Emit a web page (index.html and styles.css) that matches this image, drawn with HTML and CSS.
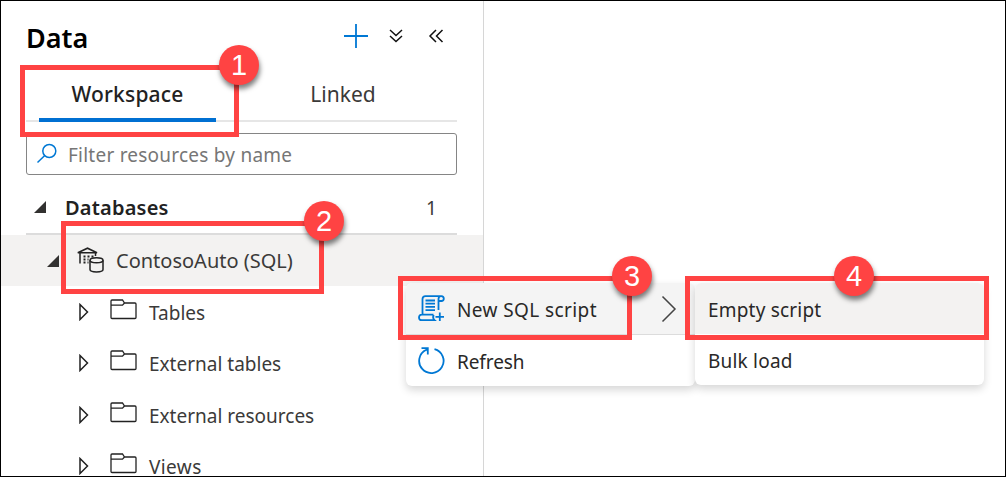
FILE: index.html
```html
<!DOCTYPE html>
<html lang="en">
<head>
<meta charset="utf-8">
<title>Data</title>
<link rel="stylesheet" href="styles.css">
</head>
<body>
<svg class="defs" width="0" height="0">
  <symbol id="folder" viewBox="0 0 27 21"><path d="M1 18.500V2Q1 1 2 1H12.500L14.500 4H25Q26 4 26 5V18.500Q26 19.500 25 19.500H2Q1 19.500 1 18.500ZM1 6.200H12.500L14.500 4"/></symbol>
  <symbol id="closed" viewBox="0 0 10 18"><path d="M1 1.500V16.500L8.500 9Z"/></symbol>
</svg>
<div class="frame">
  <aside class="sidebar">
    <header class="header">
      <h1 class="title">Data</h1>
      <svg class="plus" viewBox="0 0 26 26"><path d="M13 1v24M1 13h24"/></svg>
      <svg class="chevrons" viewBox="0 0 16 16"><path d="M2 2l6 5.500L14 2M2 8l6 5.500L14 8"/></svg>
      <svg class="chevrons" viewBox="0 0 16 16"><path d="M8 2L2 8l6 6M14.500 2l-6 6 6 6"/></svg>
    </header>
    <nav class="tabs">
      <div class="tab active"><span class="t-workspace">Workspace</span></div>
      <div class="tab linked"><span class="t-linked">Linked</span></div>
    </nav>
    <div class="search">
      <svg class="lens" viewBox="0 0 22 22"><circle cx="13.300" cy="8" r="6.500"/><path d="M8.500 12.700L1.500 19.500"/></svg>
      <span class="t-filter">Filter resources by name</span>
    </div>
    <div class="group">
      <svg class="open" viewBox="0 0 12 12"><path d="M12 0V12H0Z"/></svg>
      <span class="t-databases">Databases</span>
      <span class="count">1</span>
    </div>
    <div class="selected">
      <svg class="open" viewBox="0 0 12 12"><path d="M12 0V12H0Z"/></svg>
      <svg class="dbicon" viewBox="0 0 28 26"><path d="M.8 5.800L10.500 1.200L20 5.800ZM3 6v10.500M18.500 6v3"/><path class="dots" d="M6.500 9.500h10M6.500 12.500h5M6.500 15.500h5"/><ellipse cx="19.500" cy="13.200" rx="6.500" ry="2.500"/><path d="M13 13.200v9.300c0 3.200 13 3.200 13 0v-9.300"/></svg>
      <span class="t-contoso">ContosoAuto (SQL)</span>
    </div>
    <div class="rows">
      <div class="row"><svg class="closed"><use href="#closed"/></svg><svg class="folder"><use href="#folder"/></svg><span class="t-tables">Tables</span></div>
      <div class="row"><svg class="closed"><use href="#closed"/></svg><svg class="folder"><use href="#folder"/></svg><span class="t-exttables">External tables</span></div>
      <div class="row"><svg class="closed"><use href="#closed"/></svg><svg class="folder"><use href="#folder"/></svg><span class="t-extres">External resources</span></div>
      <div class="row"><svg class="closed"><use href="#closed"/></svg><svg class="folder"><use href="#folder"/></svg><span class="t-views">Views</span></div>
    </div>
  </aside>
  <div class="menu main-menu">
    <div class="item hover">
      <svg class="micon" viewBox="0 0 27 27"><path d="M4.500 19.700V4Q4.500 1.200 7.500 1.200H23.300Q25.800 1.500 25.800 3.700T23.300 6H20.500M20.500 15V4Q20.500 1.200 23 1.200M15.500 19.700H3.800Q1 19.700 1 22.400T3.800 25.200H16.500Q14.500 23.500 15.500 19.700M7.500 5.500h9.500M7.500 8.700h9.500M7.500 11.900h9.500M7.500 15.100h9.500M21.800 17.500v8.500M17.500 21.800h8.500"/></svg>
      <span class="t-new">New SQL script</span>
      <svg class="more" viewBox="0 0 16 28"><path d="M1.500 1.500L14 14 1.500 26.500"/></svg>
    </div>
    <div class="item">
      <svg class="micon refresh" viewBox="0 0 27 27"><path d="M16.500 2.100A12.200 12.200 0 1 1 8.300 2.800M3.500 1.200H9.800V7.500M9.500 1.500L7.500 3.700"/></svg>
      <span class="t-refresh">Refresh</span>
    </div>
  </div>
  <div class="menu sub-menu">
    <div class="item hover"><span class="t-empty">Empty script</span></div>
    <div class="item"><span class="t-bulk">Bulk load</span></div>
  </div>
  <div class="mark mark1"><b class="badge">1</b></div>
  <div class="mark mark2"><b class="badge">2</b></div>
  <div class="mark mark3"><b class="badge">3</b></div>
  <div class="mark mark4"><b class="badge">4</b></div>
</div>
</body>
</html>
```
FILE: styles.css
```css
* { box-sizing: border-box; }
body { margin: 0; background: #fff; font-family: "Noto Sans", "Open Sans", sans-serif; font-size: 19px; color: #3b3a39; }
svg { display: block; flex: none; fill: none; stroke: #222; stroke-width: 1.5; }
span { white-space: nowrap; line-height: 28px; }
.defs { position: absolute; }
.frame { position: relative; width: 1006px; height: 477px; border: 1px solid #000; overflow: hidden; }
.sidebar { width: 483px; height: 475px; border-right: 1px solid #d6d6d6; }
.header { display: flex; align-items: center; height: 70px; padding-left: 25px; }
.title { margin: 0; width: 317px; font-size: 27px; line-height: 36px; font-weight: 600; color: #000; padding-top: 3px; }
.plus { width: 26px; height: 26px; stroke: #0078d4; stroke-width: 1.8; }
.chevrons { width: 16px; height: 16px; margin-left: 19px; stroke: #111; }
.chevrons + .chevrons { margin-left: 24px; }
.tabs { display: flex; height: 51px; margin: 0 26px 0 25px; padding-left: 13px; border-bottom: 2px solid #e6e6e6; }
.tab { display: flex; flex: none; justify-content: center; width: 177px; height: 51px; padding-top: 9px; font-size: 21px; }
.active { border-bottom: 4px solid #0070d2; font-weight: 500; color: #222; }
.t-workspace { letter-spacing: .2px; }
.linked { width: 254px; }
.search { display: flex; align-items: center; height: 42px; margin: 11px 26px 0 25px; padding-left: 9px; border: 1px solid #858585; border-radius: 3px; color: #767676; }
.lens { width: 22px; height: 22px; margin-right: 10px; stroke: #0078d4; }
.t-filter { letter-spacing: .23px; padding-top: 1px; }
.group { display: flex; align-items: center; height: 60px; margin: 0 26px 0 25px; padding: 6px 0 0 8px; border-bottom: 2px solid #dcdcdc; }
.open { width: 12px; height: 12px; fill: #323130; stroke: none; }
.group .open { margin-right: 19px; }
.t-databases { width: 361px; padding-top: 1px; font-size: 20px; letter-spacing: .2px; font-weight: 600; color: #222; }
.count { padding-top: 1px; }
.selected { display: flex; align-items: center; height: 51px; padding-left: 46px; background: #f3f2f1; }
.dbicon { width: 28px; height: 26px; margin: -2px 11px 0 18px; }
.t-contoso { font-size: 20px; }
.dots { stroke-dasharray: 2 2; stroke-width: 2; }
.rows { height: 189px; }
.row { display: flex; align-items: center; height: 51.5px; padding-left: 78px; }
.closed { width: 10px; height: 18px; margin-right: 21px; }
.folder { width: 27px; height: 21px; margin-right: 12px; margin-top: -5px; stroke-width: 1.3; }
.row span { padding-top: 2px; line-height: 16px; }
.row:last-child span { padding-top: 1px; }
.t-views { letter-spacing: .4px; }
.menu { position: absolute; top: 282px; width: 289px; height: 103px; background: #fff; border-radius: 6px; overflow: hidden; box-shadow: 0 4px 9px rgba(0,0,0,.16); }
.main-menu { left: 405px; }
.sub-menu { left: 694px; width: 289px; height: 102px; }
.item { display: flex; align-items: center; height: 51px; padding-left: 12px; color: #292827; }
.main-menu .hover { height: 52px; background: #f4f4f4; border-bottom: 1px solid #dcdcdc; }
.sub-menu .hover { background: #f3f2f1; }
.sub-menu .item { padding-left: 13px; padding-top: 3px; }
.micon { width: 27px; height: 27px; margin-right: 12px; stroke: #0078d4; stroke-width: 1.8; }
.main-menu span { padding-top: 3px; }
.t-new { letter-spacing: .4px; }
.t-refresh { letter-spacing: -.1px; }
.t-empty, .t-bulk { letter-spacing: .2px; }
.more { width: 16px; height: 28px; margin-left: auto; margin-right: 18px; stroke: #444; }
.mark { position: absolute; border: 5px solid #ff4343; }
.mark1 { left: 19px; top: 64px; width: 219px; height: 72px; }
.mark2 { left: 60px; top: 220px; width: 263px; height: 73px; }
.mark3 { left: 397px; top: 275px; width: 234px; height: 64px; }
.mark4 { left: 684px; top: 275px; width: 304px; height: 64px; }
.badge { position: absolute; right: -25px; top: -25px; width: 40px; height: 40px; border-radius: 50%; background: #ff4343; color: #fff; font: 400 29px/41px "Liberation Sans", sans-serif; text-align: center; box-shadow: 1px 4px 5px rgba(0,0,0,.5); }
.mark4 .badge { right: 110px; }
```
